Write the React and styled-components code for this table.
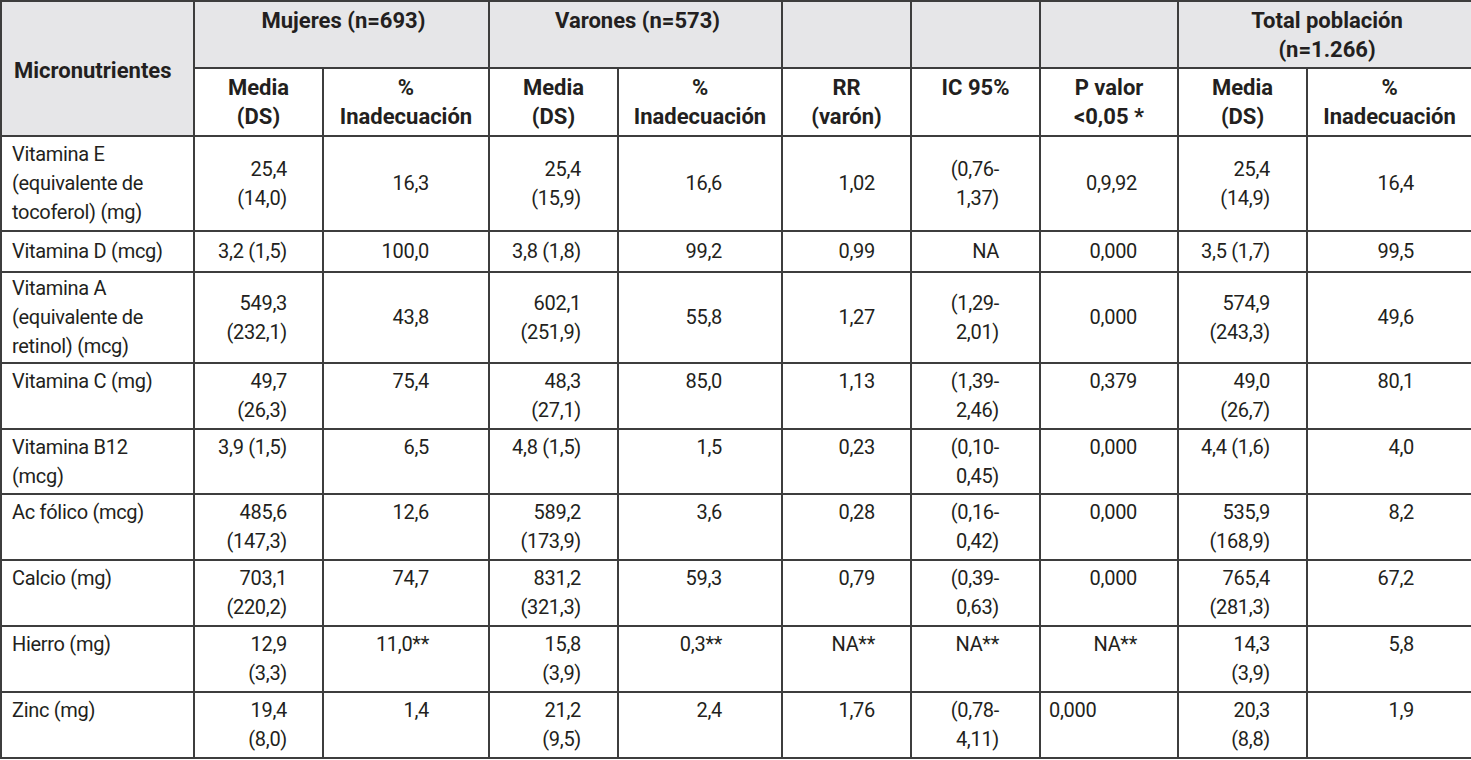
import React from "react";
import styled, { createGlobalStyle } from "styled-components";

const GlobalStyle = createGlobalStyle`
  html, body {
    margin: 0;
    padding: 0;
    background: #ffffff;
  }
  body {
    font-family: Roboto, "Liberation Sans", sans-serif;
    color: #231f20;
  }
`;

// padding-right of each numeric column
const colPad = [0, 35, 59, 36, 59, 35, 40, 40, 36, 57];
const colWidths = [193, 129, 166, 129, 164, 129, 129, 138, 129, 165];

const rows = [
  {
    h: 95,
    mid: true,
    cells: [
      "Vitamina E\n(equivalente de\ntocoferol) (mg)",
      "25,4\n(14,0)",
      "16,3",
      "25,4\n(15,9)",
      "16,6",
      "1,02",
      "(0,76-\n1,37)",
      "0,9,92",
      "25,4\n(14,9)",
      "16,4",
    ],
  },
  {
    h: 41,
    mid: true,
    cells: [
      "Vitamina D (mcg)",
      "3,2 (1,5)",
      "100,0",
      "3,8 (1,8)",
      "99,2",
      "0,99",
      "NA",
      "0,000",
      "3,5 (1,7)",
      "99,5",
    ],
  },
  {
    h: 91,
    mid: true,
    cells: [
      "Vitamina A\n(equivalente de\nretinol) (mcg)",
      "549,3\n(232,1)",
      "43,8",
      "602,1\n(251,9)",
      "55,8",
      "1,27",
      "(1,29-\n2,01)",
      "0,000",
      "574,9\n(243,3)",
      "49,6",
    ],
  },
  {
    h: 66,
    cells: [
      "Vitamina C (mg)",
      "49,7\n(26,3)",
      "75,4",
      "48,3\n(27,1)",
      "85,0",
      "1,13",
      "(1,39-\n2,46)",
      "0,379",
      "49,0\n(26,7)",
      "80,1",
    ],
  },
  {
    h: 65,
    cells: [
      "Vitamina B12\n(mcg)",
      "3,9 (1,5)",
      "6,5",
      "4,8 (1,5)",
      "1,5",
      "0,23",
      "(0,10-\n0,45)",
      "0,000",
      "4,4 (1,6)",
      "4,0",
    ],
  },
  {
    h: 66,
    cells: [
      "Ac fólico (mcg)",
      "485,6\n(147,3)",
      "12,6",
      "589,2\n(173,9)",
      "3,6",
      "0,28",
      "(0,16-\n0,42)",
      "0,000",
      "535,9\n(168,9)",
      "8,2",
    ],
  },
  {
    h: 66,
    cells: [
      "Calcio (mg)",
      "703,1\n(220,2)",
      "74,7",
      "831,2\n(321,3)",
      "59,3",
      "0,79",
      "(0,39-\n0,63)",
      "0,000",
      "765,4\n(281,3)",
      "67,2",
    ],
  },
  {
    h: 66,
    cells: [
      "Hierro (mg)",
      "12,9\n(3,3)",
      "11,0**",
      "15,8\n(3,9)",
      "0,3**",
      "NA**",
      "NA**",
      "NA**",
      "14,3\n(3,9)",
      "5,8",
    ],
  },
  {
    h: 66,
    leftP: true,
    cells: [
      "Zinc (mg)",
      "19,4\n(8,0)",
      "1,4",
      "21,2\n(9,5)",
      "2,4",
      "1,76",
      "(0,78-\n4,11)",
      "0,000",
      "20,3\n(8,8)",
      "1,9",
    ],
  },
];

const App = () => {
  return (
    <>
      <GlobalStyle />
      <Table>
        <colgroup>
          {colWidths.map((w, i) => (
            <col key={i} style={{ width: w }} />
          ))}
        </colgroup>
        <thead>
          <HeadRow $h={67}>
            <HeadCell rowSpan={2} $left $middle>
              Micronutrientes
            </HeadCell>
            <HeadCell colSpan={2}>Mujeres (n=693)</HeadCell>
            <HeadCell colSpan={2}>Varones (n=573)</HeadCell>
            <HeadCell />
            <HeadCell />
            <HeadCell />
            <HeadCell colSpan={2}>
              Total población
              <br />
              (n=1.266)
            </HeadCell>
          </HeadRow>
          <HeadRow $h={68}>
            <SubHead>
              Media
              <br />
              (DS)
            </SubHead>
            <SubHead>
              %<br />
              Inadecuación
            </SubHead>
            <SubHead>
              Media
              <br />
              (DS)
            </SubHead>
            <SubHead>
              %<br />
              Inadecuación
            </SubHead>
            <SubHead>
              RR
              <br />
              (varón)
            </SubHead>
            <SubHead>IC 95%</SubHead>
            <SubHead>
              P valor
              <br />
              &lt;0,05 *
            </SubHead>
            <SubHead>
              Media
              <br />
              (DS)
            </SubHead>
            <SubHead>
              %<br />
              Inadecuación
            </SubHead>
          </HeadRow>
        </thead>
        <tbody>
          {rows.map((r, ri) => (
            <BodyRow key={ri} $h={r.h}>
              {r.cells.map((c, ci) =>
                ci === 0 ? (
                  <NameCell key={ci} $middle={r.mid}>
                    {c}
                  </NameCell>
                ) : (
                  <Cell
                    key={ci}
                    $middle={r.mid}
                    $pr={colPad[ci]}
                    $left={r.leftP && ci === 7}
                  >
                    {c}
                  </Cell>
                )
              )}
            </BodyRow>
          ))}
        </tbody>
      </Table>
    </>
  );
};

export default App;

const Table = styled.table`
  width: 1471px;
  table-layout: fixed;
  border-collapse: collapse;
  font-size: 20px;
  letter-spacing: -0.3px;
  line-height: 29px;
  color: #231f20;
`;

const HeadRow = styled.tr`
  height: ${({ $h }) => $h}px;
`;

const BodyRow = styled.tr`
  height: ${({ $h }) => $h}px;
`;

const HeadCell = styled.th`
  border: 2px solid #3d3d3d;
  background: #e6e6e8;
  font-size: 22px;
  letter-spacing: 0;
  font-weight: 700;
  text-align: ${({ $left }) => ($left ? "left" : "center")};
  vertical-align: ${({ $middle }) => ($middle ? "middle" : "top")};
  padding: 4px 8px 0 12px;
`;

const SubHead = styled.th`
  border: 2px solid #3d3d3d;
  background: #ffffff;
  font-size: 22px;
  letter-spacing: 0;
  font-weight: 700;
  text-align: center;
  vertical-align: top;
  padding: 4px 2px 0;
`;

const NameCell = styled.td`
  border: 2px solid #3d3d3d;
  white-space: pre-line;
  text-align: left;
  vertical-align: ${({ $middle }) => ($middle ? "middle" : "top")};
  padding: ${({ $middle }) => ($middle ? "0 6px 0 10px" : "3px 6px 0 10px")};
`;

const Cell = styled.td`
  border: 2px solid #3d3d3d;
  white-space: pre-line;
  text-align: ${({ $left }) => ($left ? "left" : "right")};
  vertical-align: ${({ $middle }) => ($middle ? "middle" : "top")};
  padding: ${({ $middle }) => ($middle ? "0" : "3px")} 0 0 0;
  padding-right: ${({ $pr, $left }) => ($left ? 0 : $pr)}px;
  padding-left: ${({ $left }) => ($left ? 8 : 0)}px;
`;
